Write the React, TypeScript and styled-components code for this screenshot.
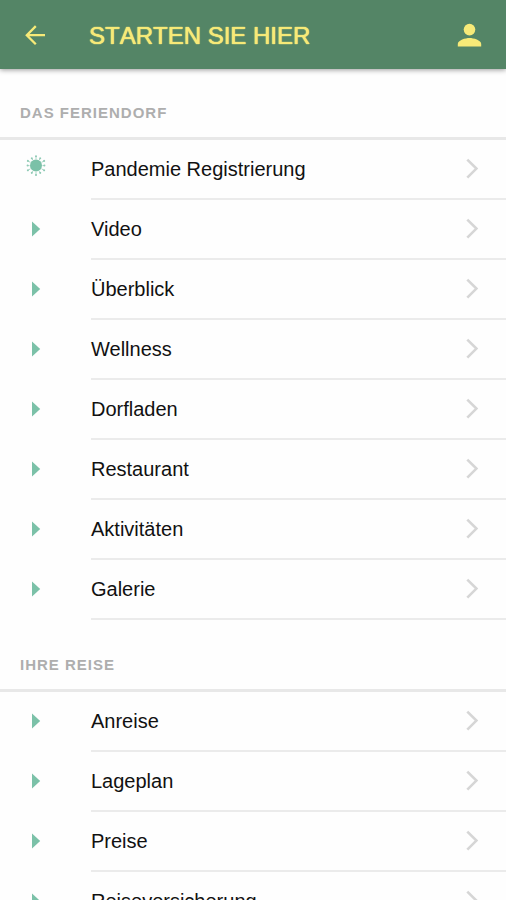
import React from "react";
import styled, { createGlobalStyle } from "styled-components";

const GlobalStyle = createGlobalStyle`
  *, *::before, *::after { box-sizing: border-box; }
  body {
    margin: 0;
    background: #fefefe;
    color: #111;
    font-family: "Liberation Sans", Arial, Helvetica, sans-serif;
  }
`;

const Screen = styled.div`
  display: flex;
  flex-direction: column;
  height: 100vh;
  overflow: hidden;
`;

const TopBar = styled.header`
  display: flex;
  flex: none;
  align-items: center;
  height: 69px;
  padding: 2px 20px 0;
  background: #548566;
  color: #f7ea78;
  box-shadow: 0 1px 5px rgba(0, 0, 0, 0.4);
  z-index: 1;
`;

const IconButton = styled.button`
  display: flex;
  padding: 0;
  border: 0;
  background: none;
  color: inherit;
  cursor: pointer;
`;

const Title = styled.h1`
  flex: 1;
  margin: 0 0 0 39px;
  font-size: 24px;
  font-weight: 400;
  font-kerning: none;
  line-height: 28px;
  text-shadow: 0 0 1px currentColor, 0 0 1px currentColor;
`;

const Content = styled.main`
  flex: 1;
  min-height: 0;
  overflow: hidden;
`;

const SectionTitle = styled.h2`
  margin: 0;
  padding: 35px 20px 16px;
  border-bottom: 3px solid #e8e8e8;
  color: #aeaeae;
  font-size: 15px;
  font-weight: 700;
  line-height: 17px;
  letter-spacing: 1px;
  text-transform: uppercase;
`;

const List = styled.ul`
  margin: 0;
  padding: 0 0 1px;
  list-style: none;
`;

const RowLink = styled.a`
  display: grid;
  grid-template-columns: 71px 1fr;
  padding-left: 20px;
  color: inherit;
  text-decoration: none;
`;

const Lead = styled.span`
  display: flex;
  align-items: center;
  height: 58px;
`;

const RowBody = styled.span`
  display: flex;
  align-items: center;
  justify-content: space-between;
  height: 60px;
  padding-right: 23px;
  border-bottom: 2px solid #ebebeb;
  font-size: 20px;
  line-height: 24px;
`;

function BackIcon() {
  return (
    <svg width="30" height="30" viewBox="0 0 30 30" fill="none" stroke="currentColor" strokeWidth="2.3" aria-hidden="true">
      <path d="M25 14.2H7M15.8 5.1 6.8 14.2l9 9.1" />
    </svg>
  );
}

function PersonIcon() {
  return (
    <svg width="33" height="34" viewBox="0 0 33 34" fill="currentColor" aria-hidden="true">
      <circle cx="16.5" cy="10.6" r="5.8" />
      <path d="M4.8 27.6v-2.7c0-3.9 7.8-6 11.7-6s11.7 2.1 11.7 6v2.7z" />
    </svg>
  );
}

function Triangle() {
  return (
    <svg width="32" height="30" viewBox="0 0 32 30" fill="#7bc1a8" aria-hidden="true">
      <path d="M12 7.4 20.2 15 12 22.6z" />
    </svg>
  );
}

function VirusIcon() {
  const spikes = Array.from({ length: 12 }, (_, i) => i * 30);
  return (
    <svg width="32" height="30" viewBox="0 0 32 30" fill="#7bc1a8" stroke="#7bc1a8" aria-hidden="true">
      <circle cx="16" cy="11.6" r="6" stroke="none" />
      {spikes.map((angle, i) => (
        <g key={angle} transform={`rotate(${angle} 16 11.6)`} opacity="0.85">
          <path d={i % 2 ? "M16 5.2V3.2" : "M16 5.2V2"} strokeWidth="0.7" />
          <circle cx="16" cy={i % 2 ? 3.2 : 2.2} r="1" stroke="none" />
        </g>
      ))}
    </svg>
  );
}

function Chevron() {
  return (
    <svg width="18" height="24" viewBox="0 0 18 24" fill="none" stroke="#d6d6d6" strokeWidth="2.6" aria-hidden="true">
      <path d="M2.3 2.6 11.4 11.6 2.3 20.6" />
    </svg>
  );
}

const sections = [
  {
    id: "feriendorf",
    title: "Das Feriendorf",
    items: ["Pandemie Registrierung", "Video", "Überblick", "Wellness", "Dorfladen", "Restaurant", "Aktivitäten", "Galerie"],
  },
  {
    id: "reise",
    title: "Ihre Reise",
    items: ["Anreise", "Lageplan", "Preise", "Reiseversicherung"],
  },
];

export default function App() {
  return (
    <Screen>
      <GlobalStyle />
      <TopBar>
        <IconButton type="button" aria-label="Zurück">
          <BackIcon />
        </IconButton>
        <Title>STARTEN SIE HIER</Title>
        <IconButton type="button" aria-label="Profil">
          <PersonIcon />
        </IconButton>
      </TopBar>
      <Content>
        {sections.map((section) => (
          <section key={section.id} aria-labelledby={section.id}>
            <SectionTitle id={section.id}>{section.title}</SectionTitle>
            <List>
              {section.items.map((item) => (
                <li key={item}>
                  <RowLink href="#">
                    <Lead>{item.startsWith("Pandemie") ? <VirusIcon /> : <Triangle />}</Lead>
                    <RowBody>
                      {item}
                      <Chevron />
                    </RowBody>
                  </RowLink>
                </li>
              ))}
            </List>
          </section>
        ))}
      </Content>
    </Screen>
  );
}
